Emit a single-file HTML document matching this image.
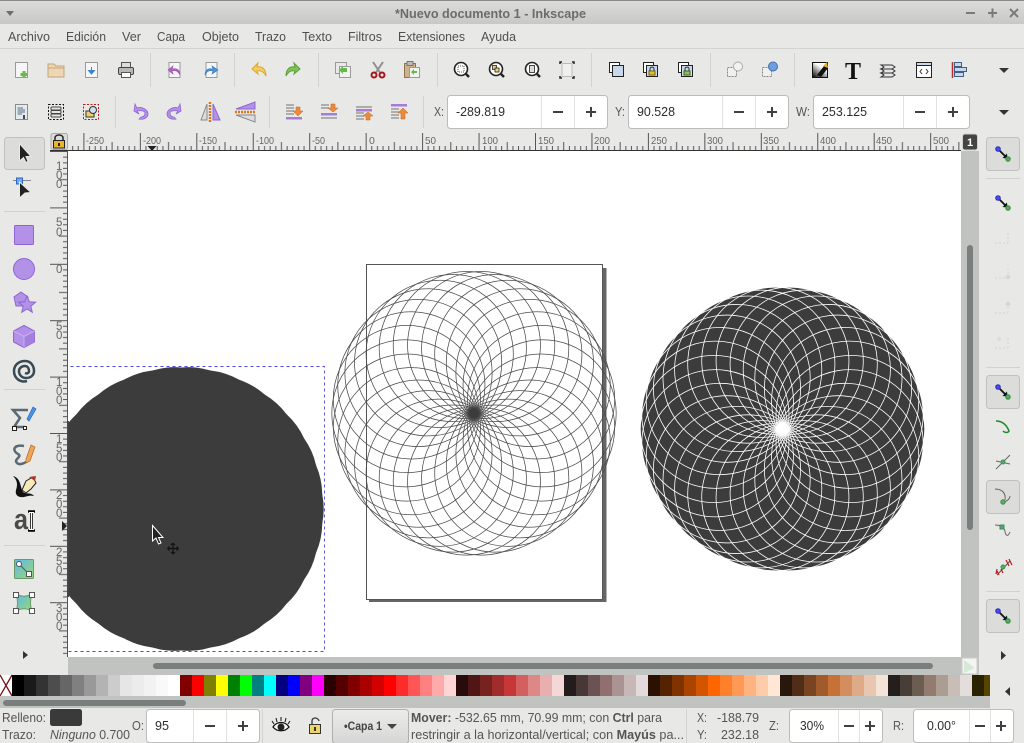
<!DOCTYPE html>
<html lang="es"><head><meta charset="utf-8"><title>Inkscape</title>
<style>
html,body{margin:0;padding:0;background:#e8e8e7;overflow:hidden}
svg{display:block}
text{font-family:"Liberation Sans",sans-serif;font-size:12.5px;fill:#4c4c4c}
.m{font-size:12.5px;fill:#505050}
.v{font-size:12.5px;fill:#2c2c2c}
.r{font-size:10.5px;fill:#666}
.l{font-size:11.5px;fill:#666}
.s{font-size:12.5px;fill:#555}
.sp{fill:#fff;stroke:#bcbcbc}
.dv{stroke:#e2e2e2;fill:none}
.sep{stroke:#d2d2d2;fill:none}
.pm{stroke:#404040;stroke-width:2;fill:none}
.p{fill:#b491e9;stroke:#8d66d4}
.doc{fill:#f6f6f6;stroke:#9a9a9a}
.btn{fill:#dcdcdb;stroke:#c0c0c0}
</style></head><body>
<svg xmlns="http://www.w3.org/2000/svg" width="1024" height="743" viewBox="0 0 1024 743">
<defs>
<linearGradient id="tb" x1="0" y1="0" x2="0" y2="1"><stop offset="0" stop-color="#dcdcdb"/><stop offset="1" stop-color="#c8c8c7"/></linearGradient>
<linearGradient id="cb" x1="0" y1="0" x2="0" y2="1"><stop offset="0" stop-color="#ececeb"/><stop offset="1" stop-color="#d6d6d5"/></linearGradient>
<linearGradient id="gr" x1="0" y1="0" x2="1" y2="1"><stop offset="0" stop-color="#5cb8f0"/><stop offset="1" stop-color="#9bd96a"/></linearGradient>
<linearGradient id="fs" x1="0.8" y1="0" x2="0.1" y2="1"><stop offset="0.3" stop-color="#fff"/><stop offset="1" stop-color="#111"/></linearGradient>
<clipPath id="cv"><rect x="68" y="151" width="893" height="506"/></clipPath>
<pattern id="rt" patternUnits="userSpaceOnUse" x="83.4" y="133" width="56.45" height="17">
<path d="M.5 0V17M6.1 13V17M11.8 13V17M17.4 13V17M23.1 13V17M28.7 9V17M34.4 13V17M40 13V17M45.7 13V17M51.3 13V17" stroke="#555" fill="none"/></pattern>
<pattern id="rl" patternUnits="userSpaceOnUse" x="50" y="151" width="18" height="56.4">
<path d="M0 .5H18M13 6.1H18M13 11.8H18M13 17.4H18M13 23H18M9 28.7H18M13 34.3H18M13 40H18M13 45.6H18M13 51.2H18" stroke="#555" fill="none"/></pattern>
<g id="gl">
<circle cx="68.600" r="73.600"/><circle cx="68.600" r="73.600" transform="rotate(12)"/><circle cx="68.600" r="73.600" transform="rotate(24)"/><circle cx="68.600" r="73.600" transform="rotate(36)"/><circle cx="68.600" r="73.600" transform="rotate(48)"/><circle cx="68.600" r="73.600" transform="rotate(60)"/><circle cx="68.600" r="73.600" transform="rotate(72)"/><circle cx="68.600" r="73.600" transform="rotate(84)"/><circle cx="68.600" r="73.600" transform="rotate(96)"/><circle cx="68.600" r="73.600" transform="rotate(108)"/><circle cx="68.600" r="73.600" transform="rotate(120)"/><circle cx="68.600" r="73.600" transform="rotate(132)"/><circle cx="68.600" r="73.600" transform="rotate(144)"/><circle cx="68.600" r="73.600" transform="rotate(156)"/><circle cx="68.600" r="73.600" transform="rotate(168)"/><circle cx="68.600" r="73.600" transform="rotate(180)"/><circle cx="68.600" r="73.600" transform="rotate(192)"/><circle cx="68.600" r="73.600" transform="rotate(204)"/><circle cx="68.600" r="73.600" transform="rotate(216)"/><circle cx="68.600" r="73.600" transform="rotate(228)"/><circle cx="68.600" r="73.600" transform="rotate(240)"/><circle cx="68.600" r="73.600" transform="rotate(252)"/><circle cx="68.600" r="73.600" transform="rotate(264)"/><circle cx="68.600" r="73.600" transform="rotate(276)"/><circle cx="68.600" r="73.600" transform="rotate(288)"/><circle cx="68.600" r="73.600" transform="rotate(300)"/><circle cx="68.600" r="73.600" transform="rotate(312)"/><circle cx="68.600" r="73.600" transform="rotate(324)"/><circle cx="68.600" r="73.600" transform="rotate(336)"/><circle cx="68.600" r="73.600" transform="rotate(348)"/>
</g>
<g id="snap"><path d="M-4-4L2.500 2.500" stroke="#111" stroke-width="1.800"/><path d="M-.5 4L4 -.5 4.500 4.500Z" fill="#111"/><circle cx="-5" cy="-5" r="2.300" fill="#4a4af0" stroke="#2c2cc0"/><circle cx="5" cy="5" r="2.100" fill="#6aa07a" stroke="#2e9a3e" stroke-width="1.300"/></g>
<g id="faint" stroke="#d0d6d0" fill="none" stroke-dasharray="2 2"><path d="M-8 6H5M5 6V-7"/></g>
</defs>

<!-- title bar -->
<rect width="1024" height="24" fill="url(#tb)"/>
<rect width="1024" height="1" fill="#8a8a8a"/>
<path d="M6 11H14L10 16Z" fill="#6e6e6e"/>
<text x="395" y="18" textLength="191" lengthAdjust="spacingAndGlyphs" font-weight="bold" style="font-size:12.5px;fill:#6c6c6c">*Nuevo documento 1 - Inkscape</text>
<path d="M966 13H975M988 13H997M992.500 8.500V17.500M1010 9L1018 17M1018 9L1010 17" stroke="#7a7a7a" stroke-width="2" fill="none"/>

<!-- menu -->
<g class="mt">
<text class="m" x="8" y="41" textLength="42" lengthAdjust="spacingAndGlyphs">Archivo</text>
<text class="m" x="66" y="41" textLength="40" lengthAdjust="spacingAndGlyphs">Edición</text>
<text class="m" x="122" y="41" textLength="19" lengthAdjust="spacingAndGlyphs">Ver</text>
<text class="m" x="157" y="41" textLength="28" lengthAdjust="spacingAndGlyphs">Capa</text>
<text class="m" x="202" y="41" textLength="37" lengthAdjust="spacingAndGlyphs">Objeto</text>
<text class="m" x="255" y="41" textLength="31" lengthAdjust="spacingAndGlyphs">Trazo</text>
<text class="m" x="302" y="41" textLength="30" lengthAdjust="spacingAndGlyphs">Texto</text>
<text class="m" x="348" y="41" textLength="34" lengthAdjust="spacingAndGlyphs">Filtros</text>
<text class="m" x="398" y="41" textLength="67" lengthAdjust="spacingAndGlyphs">Extensiones</text>
<text class="m" x="481" y="41" textLength="35" lengthAdjust="spacingAndGlyphs">Ayuda</text>
</g>
<path d="M0 48.500H1024" stroke="#d4d4d3"/>

<!-- toolbar 1 separators -->
<path class="sep" d="M150.500 53V87M234.500 53V87M318.500 53V87M437.500 53V87M591.500 53V87M710.500 53V87M794.500 53V87"/>
<!-- new -->
<g transform="translate(22,70)"><rect x="-6.500" y="-7.500" width="12" height="15" class="doc"/><path d="M2 1V8M-1.500 4.500H5.500" stroke="#6cb84a" stroke-width="3"/></g>
<!-- open -->
<g transform="translate(56,70)"><path d="M-8-6H-2L0-4H8V7H-8Z" fill="#ecd6b4" stroke="#c4a578"/><path d="M-8-2H8" stroke="#c4a578"/></g>
<!-- save -->
<g transform="translate(91,70)"><rect x="-5.500" y="-7.500" width="12" height="15" class="doc"/><path d="M.500-3V1M-2.500 0.500H3.500L.500 4Z" fill="#3b82d0" stroke="#3b82d0"/></g>
<!-- print -->
<g transform="translate(126,70)"><rect x="-4.500" y="-7.500" width="9" height="6" fill="#ddd" stroke="#555"/><rect x="-7.500" y="-2.500" width="15" height="7" rx="1.500" fill="#b8b8b8" stroke="#444"/><rect x="-4.500" y="2.500" width="9" height="5" fill="#fff" stroke="#555"/></g>
<!-- import/export -->
<g transform="translate(175,70)"><rect x="-6" y="-7.500" width="11" height="15" class="doc"/><path d="M5 5C5-1 1-2-3-1L-2-4-7 0-2 4-3 1C0 0 3 1 5 5Z" fill="#b466c4" stroke="#9a4cae" stroke-width=".6"/></g>
<g transform="translate(211,70)"><rect x="-5" y="-7.500" width="11" height="15" class="doc"/><path d="M-6 5C-6-1-2-2 2-1L1-4 7 0 1 4 2 1C-1 0-4 1-6 5Z" fill="#4a94dc" stroke="#3a78bc" stroke-width=".6"/></g>
<!-- undo redo -->
<path d="M266 76C266 69 262 66 257 67L258 63 252 69 258 74 257 71C261 70 264 72 266 76Z" fill="#f3cd62" stroke="#d9a92c"/>
<path d="M286 76C286 69 290 66 295 67L294 63 300 69 294 74 295 71C291 70 288 72 286 76Z" fill="#7fc25a" stroke="#5aa038"/>
<!-- dup cut paste -->
<g transform="translate(343,70)"><rect x="-7.500" y="-7.500" width="11" height="11" fill="#e8e8e8" stroke="#9a9a9a"/><rect x="-3.500" y="-3.500" width="11" height="11" fill="#f2f2f2" stroke="#9a9a9a"/><path d="M-4 0L0-4 0-2H4V2H0V4Z" fill="#66b848"/></g>
<g transform="translate(378,70)"><path d="M-5-8L3 4M5-8L-3 4" stroke="#8f8f8f" stroke-width="2"/><circle cx="-4" cy="5" r="2.500" fill="none" stroke="#a31818" stroke-width="2"/><circle cx="4" cy="5" r="2.500" fill="none" stroke="#a31818" stroke-width="2"/></g>
<g transform="translate(412,70)"><rect x="-7.500" y="-6.500" width="11" height="14" fill="#cfb28a" stroke="#8d7351"/><rect x="-5" y="-8.500" width="6" height="4" fill="#bbb" stroke="#777"/><rect x="-2.500" y="-2.500" width="10" height="10" fill="#f2f2f2" stroke="#9a9a9a"/><path d="M-1 2L2-1V1H5V3H2V5Z" fill="#66b848"/></g>
<!-- zooms -->
<g fill="#fff" stroke="#222" stroke-width="1.600">
<g transform="translate(461,70)"><circle cx="0" cy="-1" r="6.500"/><path d="M5 4L8 7" stroke-width="2.500"/><rect x="-3" y="-4" width="6" height="6" fill="none" stroke-width=".8" stroke-dasharray="1 1"/></g>
<g transform="translate(496,70)"><circle cx="0" cy="-1" r="6.500"/><path d="M5 4L8 7" stroke-width="2.500"/><rect x="-3.500" y="-4.500" width="4" height="4" fill="#ecd27a" stroke-width=".8"/><rect x="-1" y="-2" width="4" height="4" fill="#ecd27a" stroke-width=".8"/></g>
<g transform="translate(532,70)"><circle cx="0" cy="-1" r="6.500"/><path d="M5 4L8 7" stroke-width="2.500"/><rect x="-2.500" y="-4.500" width="5" height="7" fill="#ddd" stroke-width=".8"/></g>
</g>
<g transform="translate(567,70)"><rect x="-5" y="-6.500" width="10" height="13" fill="#f0f0f0" stroke="#bbb"/><path d="M-7-6V-8H-5M5-8H7V-6M7 6V8H5M-5 8H-7V6" stroke="#222" stroke-width="1.500" fill="none"/></g>
<!-- groups -->
<g stroke="#222"><rect x="609.500" y="62.500" width="10" height="10" fill="#fff"/><rect x="612.500" y="65.500" width="11" height="11" fill="#c6d8ea"/></g>
<g stroke="#222"><rect x="643.500" y="62.500" width="10" height="10" fill="#fff"/><rect x="646.500" y="65.500" width="11" height="11" fill="#c6d8ea"/></g><rect x="649" y="71" width="6" height="4" fill="#e8bf2a" stroke="#7a6310"/><path d="M650 71V69C650 66.500 654 66.500 654 69V71" fill="none" stroke="#333"/>
<g stroke="#222"><rect x="678.500" y="62.500" width="10" height="10" fill="#fff"/><rect x="681.500" y="65.500" width="11" height="11" fill="#c6d8ea"/></g><rect x="684" y="71" width="6" height="4" fill="#8cc05a" stroke="#44661c"/><path d="M685 71V69C685 66.500 689 66.500 689 69V71" fill="none" stroke="#333"/>
<!-- snap objects -->
<g transform="translate(735,70)"><rect x="-7.500" y="-2.500" width="9" height="9" fill="#f0f0f0" stroke="#888" stroke-dasharray="2 1"/><circle cx="3" cy="-3.500" r="4.500" fill="#f2f2f2" stroke="#aaa"/></g>
<g transform="translate(770,70)"><rect x="-7.500" y="-2.500" width="9" height="9" fill="#f0f0f0" stroke="#888" stroke-dasharray="2 1"/><circle cx="3" cy="-3.500" r="4.500" fill="#6f9fdb" stroke="#3e6fb0"/></g>
<!-- fill stroke, text, layers, xml, align -->
<g transform="translate(820,70)"><rect x="-7.500" y="-7.500" width="15" height="15" fill="url(#fs)" stroke="#111"/><path d="M-3 5L4-4 8-2 1 7Z" fill="#111"/><path d="M3-4L7-8 8-2Z" fill="#e8b020"/></g>
<text x="845" y="79" style="font-family:'Liberation Serif',serif;font-size:24px;font-weight:bold;fill:#111">T</text>
<g transform="translate(888,70)" fill="#e6e6e6" stroke="#333"><path d="M-7-5H4L7-3 4-1H-7L-4-3Z"/><path d="M-7-1H4L7 1 4 3H-7L-4 1Z"/><path d="M-7 3H4L7 5 4 7H-7L-4 5Z"/></g>
<g transform="translate(924,70)"><rect x="-7.500" y="-7.500" width="15" height="15" fill="#fff" stroke="#222"/><rect x="-7.500" y="-7.500" width="15" height="3" fill="#c8d8e8" stroke="#222"/><path d="M-2-1L-4 1.500-2 4M2-1L4 1.500 2 4" stroke="#333" fill="none"/></g>
<g transform="translate(959,70)"><path d="M-6.500-8V8" stroke="#c02a2a" stroke-width="1.500"/><rect x="-4.500" y="-7.500" width="7" height="4" fill="#c6d8ea" stroke="#3e5f88"/><rect x="-4.500" y="-2.500" width="12" height="4" fill="#c6d8ea" stroke="#3e5f88"/><rect x="-4.500" y="2.500" width="9" height="4" fill="#c6d8ea" stroke="#3e5f88"/></g>
<path d="M999 68H1009L1004 73Z" fill="#333"/>

<!-- toolbar 2 -->
<path class="sep" d="M115.500 96V128M269.500 96V128M423.500 96V128"/>
<g transform="translate(21,112)"><rect x="-5.500" y="-7.500" width="12" height="15" fill="#e4eaf0" stroke="#8a8a8a"/><path d="M-3.500-4H2M-3.500-2H4M-3.500 0H4M-3.500 2H1" stroke="#5a6a7a"/><path d="M3 3V7" stroke="#111" stroke-width="1.500"/></g>
<g transform="translate(56,112)"><rect x="-7.500" y="-7.500" width="15" height="15" fill="none" stroke="#111" stroke-dasharray="2 1.500"/><g fill="#e6e6e6" stroke="#444"><rect x="-5" y="-5" width="10" height="3" rx="1"/><rect x="-5" y="-1.500" width="10" height="3" rx="1"/><rect x="-5" y="2" width="10" height="3" rx="1"/></g></g>
<g transform="translate(91,112)"><rect x="-7.500" y="-7.500" width="15" height="15" fill="none" stroke="#c01818" stroke-dasharray="2 1.500"/><rect x="-5" y="-1" width="8" height="6" fill="#f0d064" stroke="#333"/><circle cx="2" cy="-2" r="3.500" fill="#cfe0ee" stroke="#333"/></g>
<g class="p"><path d="M135 104L137 108C142 106 148 110 148 114 148 118 143 120 139 119L141 117C144 117 145 115 145 113 145 111 141 110 137 111L139 114 134 111Z" stroke-width=".8"/>
<path d="M180 104L178 108C173 106 167 110 167 114 167 118 172 120 176 119L174 117C171 117 170 115 170 113 170 111 174 110 178 111L176 114 181 111Z" stroke-width=".8"/></g>
<g transform="translate(210,112)"><path d="M-3-8L-3 8H-9Z" fill="#ddd" stroke="#888"/><path d="M3-8L3 8H10Z" class="p"/><path d="M0-10V10" stroke="#d8781c" stroke-width="2.500" stroke-dasharray="2 1"/></g>
<g transform="translate(245,112)"><path d="M-9-3L10-3V-10Z" class="p"/><path d="M-9 3L10 3V10Z" fill="#ddd" stroke="#888"/><path d="M-10 0H11" stroke="#d8781c" stroke-width="2.500" stroke-dasharray="2 1"/></g>
<g id="z1" transform="translate(294,112)"><path d="M-8-7H0M-8-4H0M-8-1H0M-8 2H0" stroke="#999" stroke-width="1.500"/><rect x="-8" y="5" width="16" height="2.500" fill="#a87bd8"/><path d="M2-5H6V-1H9L4 4-1-1H2Z" fill="#ee8a3c" stroke="#c06018" stroke-width=".5"/></g>
<g transform="translate(329,112)"><path d="M-8-7H0M-8-4H0M-8 6H8" stroke="#999" stroke-width="1.500"/><rect x="-8" y="1" width="16" height="2.500" fill="#a87bd8"/><path d="M2-8H6V-4H9L4 0-1-4H2Z" fill="#ee8a3c" stroke="#c06018" stroke-width=".5"/></g>
<g transform="translate(364,112)"><path d="M-8 1H0M-8 4H0M-8 7H0" stroke="#999" stroke-width="1.500"/><path d="M-8-5H8" stroke="#999" stroke-width="1.500"/><rect x="-8" y="-3" width="16" height="2.500" fill="#a87bd8"/><path d="M2 8H6V4H9L4 0-1 4H2Z" fill="#ee8a3c" stroke="#c06018" stroke-width=".5"/></g>
<g transform="translate(399,112)"><path d="M-8-3H0M-8 0H0M-8 3H0M-8 6H0" stroke="#999" stroke-width="1.500"/><rect x="-8" y="-8" width="16" height="2.500" fill="#a87bd8"/><path d="M2 7H6V1H9L4-4-1 1H2Z" fill="#ee8a3c" stroke="#c06018" stroke-width=".5"/></g>

<text class="s" x="434" y="116" textLength="10" lengthAdjust="spacingAndGlyphs">X:</text>
<rect class="sp" x="447.500" y="95.500" width="160" height="33" rx="3"/>
<path class="dv" d="M541.500 96V128M574.500 96V128"/>
<text class="v" x="456" y="116" textLength="49" lengthAdjust="spacingAndGlyphs">-289.819</text>
<path class="pm" d="M553 112H563M586 112H596M591 107V117"/>
<text class="s" x="615" y="116" textLength="10" lengthAdjust="spacingAndGlyphs">Y:</text>
<rect class="sp" x="628.500" y="95.500" width="160" height="33" rx="3"/>
<path class="dv" d="M722.500 96V128M755.500 96V128"/>
<text class="v" x="637" y="116" textLength="38" lengthAdjust="spacingAndGlyphs">90.528</text>
<path class="pm" d="M734 112H744M767 112H777M772 107V117"/>
<text class="s" x="796" y="116" textLength="14" lengthAdjust="spacingAndGlyphs">W:</text>
<rect class="sp" x="813.500" y="95.500" width="156" height="33" rx="3"/>
<path class="dv" d="M903.500 96V128M936.500 96V128"/>
<text class="v" x="822" y="116" textLength="45" lengthAdjust="spacingAndGlyphs">253.125</text>
<path class="pm" d="M915 112H925M948 112H958M953 107V117"/>
<path d="M999 110H1009L1004 115Z" fill="#333"/>

<!-- canvas -->
<rect x="68" y="151" width="893" height="506" fill="#fff"/>
<g clip-path="url(#cv)">
<path d="M603 268H606.500V602H369V600H603Z" fill="#666"/>
<rect x="366.500" y="264.500" width="236" height="335" fill="none" stroke="#555"/>
<use href="#gl" transform="translate(474,413.300)" fill="none" stroke="#4a4a4a" stroke-width=".75"/>
<circle cx="474" cy="413.300" r="5.200" fill="#3c3c3c"/>
<use href="#gl" transform="translate(782.500,429)" fill="#3c3c3c"/>
<use href="#gl" transform="translate(782.500,429)" fill="none" stroke="#fff" stroke-width=".8"/>
<circle cx="782.500" cy="429" r="5.500" fill="#fff"/>
<use href="#gl" transform="translate(181.500,509)" fill="#3c3c3c"/>
<circle cx="181.500" cy="509" r="30" fill="#3c3c3c"/>
<rect x="40.500" y="366.500" width="284" height="285" fill="none" stroke="#4a4ae0" stroke-width=".9" stroke-dasharray="3 3"/>
<path d="M152.500 525.500V541L156 538 158.500 544 161 543 158.500 537.500H163Z" fill="#222" stroke="#fff"/>
<path d="M173 543V554M167.500 548.500H178.500M173 543L171 545M173 543L175 545M173 554L171 552M173 554L175 552M167.500 548.500L169.500 546.500M167.500 548.500L169.500 550.500M178.500 548.500L176.500 546.500M178.500 548.500L176.500 550.500" stroke="#111" stroke-width="1.200" fill="none"/>
</g>

<!-- top ruler -->
<rect x="68" y="133" width="894" height="17" fill="url(#rt)"/>
<path d="M50 150.500H962" stroke="#333"/>
<g class="rr">
<text class="r" x="86" y="144" textLength="18" lengthAdjust="spacingAndGlyphs">-250</text>
<text class="r" x="143" y="144" textLength="18" lengthAdjust="spacingAndGlyphs">-200</text>
<text class="r" x="199" y="144" textLength="18" lengthAdjust="spacingAndGlyphs">-150</text>
<text class="r" x="256" y="144" textLength="18" lengthAdjust="spacingAndGlyphs">-100</text>
<text class="r" x="312" y="144" textLength="13" lengthAdjust="spacingAndGlyphs">-50</text>
<text class="r" x="369" y="144">0</text>
<text class="r" x="425" y="144" textLength="11" lengthAdjust="spacingAndGlyphs">50</text>
<text class="r" x="482" y="144" textLength="16" lengthAdjust="spacingAndGlyphs">100</text>
<text class="r" x="538" y="144" textLength="16" lengthAdjust="spacingAndGlyphs">150</text>
<text class="r" x="594" y="144" textLength="16" lengthAdjust="spacingAndGlyphs">200</text>
<text class="r" x="651" y="144" textLength="16" lengthAdjust="spacingAndGlyphs">250</text>
<text class="r" x="707" y="144" textLength="16" lengthAdjust="spacingAndGlyphs">300</text>
<text class="r" x="763" y="144" textLength="16" lengthAdjust="spacingAndGlyphs">350</text>
<text class="r" x="820" y="144" textLength="16" lengthAdjust="spacingAndGlyphs">400</text>
<text class="r" x="876" y="144" textLength="16" lengthAdjust="spacingAndGlyphs">450</text>
<text class="r" x="933" y="144" textLength="16" lengthAdjust="spacingAndGlyphs">500</text>
</g>
<path d="M147.500 146H156.500L152 151Z" fill="#222"/>
<!-- left ruler -->
<rect x="50" y="151" width="18" height="506" fill="url(#rl)"/>
<rect x="67" y="151" width="1" height="506" fill="#555"/>
<rect x="67" y="421" width="2" height="176" fill="#444"/>
<path d="M62 521V531L67 526Z" fill="#222"/>
<g>
<text class="l" x="56" y="170">1</text><text class="l" x="56" y="179">0</text><text class="l" x="56" y="188">0</text>
<text class="l" x="56" y="226">5</text><text class="l" x="56" y="236">0</text>
<text class="l" x="56" y="273">0</text>
<text class="l" x="56" y="330">5</text><text class="l" x="56" y="339">0</text>
<text class="l" x="56" y="386">1</text><text class="l" x="56" y="395">0</text><text class="l" x="56" y="404">0</text>
<text class="l" x="56" y="443">1</text><text class="l" x="56" y="452">5</text><text class="l" x="56" y="461">0</text>
<text class="l" x="56" y="499">2</text><text class="l" x="56" y="508">0</text><text class="l" x="56" y="517">0</text>
<text class="l" x="56" y="556">2</text><text class="l" x="56" y="565">5</text><text class="l" x="56" y="574">0</text>
<text class="l" x="56" y="612">3</text><text class="l" x="56" y="621">0</text><text class="l" x="56" y="630">0</text>
</g>
<!-- lock corner -->
<rect x="51" y="133.500" width="16.500" height="16" fill="#dcdcdb" stroke="#aaa" rx="2"/>
<path d="M55 141V138C55 134 63 134 63 138V141" fill="none" stroke="#222" stroke-width="1.500"/>
<rect x="53.500" y="140.500" width="11" height="7.500" fill="#e9b52c" stroke="#222"/>
<rect x="58" y="143" width="2" height="3" fill="#222"/>

<!-- scrollbars -->
<rect x="961" y="151" width="18" height="524" fill="#c1c3c1"/>
<rect x="68" y="657" width="911" height="18" fill="#c1c3c1"/>
<rect x="967" y="245" width="6" height="285" rx="3" fill="#7b7e7e"/>
<rect x="153" y="663" width="780" height="6" rx="3" fill="#7b7e7e"/>
<path d="M962 658H977V674H962Z" fill="#f4f4f4" stroke="#ccc"/>
<path d="M964 660L975 668 964 673Z" fill="#d6e8d6"/>
<rect x="961" y="133" width="18" height="18" fill="#e8e8e7"/>
<rect x="962.500" y="134" width="15" height="16" rx="2.500" fill="#444" stroke="#d0d0d0"/>
<text x="967" y="146" style="font-size:11px;font-weight:bold;fill:#fff">1</text>

<!-- left toolbar -->
<rect class="btn" x="4.500" y="137.500" width="40" height="32" rx="3"/>
<path d="M19.500 143.500V161L23.500 157.500 26 162.500 28 161.500 26 156.500H31Z" fill="#222" stroke="#e8e8e8"/>
<path d="M13 180.500H31" stroke="#888"/>
<rect x="16.500" y="178" width="6" height="6" fill="#6eaaf0" stroke="#2a64c8"/>
<path d="M19.500 182V198L25 193 31 192.500Z" fill="#222" stroke="#e8e8e8"/>
<path class="sep" d="M4 211.500H45"/>
<rect class="p" x="14.500" y="225.500" width="19" height="19" rx="1"/>
<circle class="p" cx="24" cy="269" r="10.500"/>
<path class="p" d="M21 292L28 297 26 306 16 306 14 297Z"/>
<path class="p" d="M27 296L29.400 301.800 35.600 302.200 30.800 306.200 32.300 312.300 27 309 21.700 312.300 23.200 306.200 18.400 302.200 24.600 301.800Z"/>
<g><path class="p" d="M24 325.500L34.500 331V342L24 347.500 13.500 342V331Z"/><path d="M24 336.500L34.500 331V342L24 347.500Z" fill="#a47fdc"/><path d="M13.500 331L24 336.500 34.500 331M24 336.500V347.500" fill="none" stroke="#c8aef0"/></g>
<path d="M27 381C20 383 14 378 14 371 14 364 20 361 25 361 31 361 34 366 34 371 34 375 31 378 26 378 22 378 19 375 19 371 19 368 22 366 25 366 28 366 29 369 29 371 29 373 27 374 25 373" fill="none" stroke="#3a4a54" stroke-width="2.500"/>
<path class="sep" d="M4 389.500H45"/>
<g><path d="M28 410H13L20 418 14 427H25" fill="none" stroke="#5a6a74" stroke-width="2.500"/><path d="M27 419L33 407 36 409 29 421Z" fill="#4a94e8" stroke="#2a64b8" stroke-width=".7"/><rect x="12.500" y="426.500" width="4" height="4" fill="#fff" stroke="#222"/><rect x="23.500" y="426.500" width="3" height="3" fill="#fff" stroke="#222"/></g>
<g><path d="M24 446C13 444 12 451 18 454 23 457 13 459 17 463 19 465 23 464 26 462" fill="none" stroke="#5a6a74" stroke-width="2.500"/><path d="M26 459L31 445 35 447 30 461 26 463Z" fill="#f0a458" stroke="#b06a20" stroke-width=".7"/></g>
<g><path d="M13 476C17 480 18 484 16 490 15 494 17 498 24 497 28 496 30 495 34 496 30 491 24 496 22 490 20 484 20 478 13 476Z" fill="#111"/><path d="M22 490L26 481 33 477 36 483 31 489 26 493Z" fill="#f7e9b8" stroke="#222"/><path d="M29 477L36 476 35 481Z" fill="#b03030"/></g>
<g><text x="14" y="529" textLength="14" lengthAdjust="spacingAndGlyphs" style="font-size:29px;font-weight:bold;fill:#4a4a4a">a</text><path d="M28 511.500H35M28 530.500H35M31.500 511.500V530.500" stroke="#000" stroke-width="2.500" fill="none"/><path d="M29 512.500H34M29 529.500H34M31.500 512.500V529.500" stroke="#fff" fill="none"/></g>
<path class="sep" d="M4 545.500H45"/>
<g><rect x="14.500" y="559.500" width="19" height="19" rx="1" fill="url(#gr)" stroke="#6a9a6a"/><path d="M19 564L29 574" stroke="#555"/><circle cx="19" cy="564" r="2.500" fill="#fff" stroke="#555"/><rect x="26.500" y="571.500" width="5" height="5" fill="#fff" stroke="#555"/></g>
<g><path d="M16 594C22 597 26 597 32 594 30 600 30 606 32 611 26 608 22 608 16 611 18 606 18 600 16 594Z" fill="url(#gr)" stroke="#6a9a6a"/><g fill="#fff" stroke="#555"><rect x="13.500" y="592.500" width="5" height="5"/><rect x="29.500" y="592.500" width="5" height="5"/><rect x="13.500" y="608.500" width="5" height="5"/><rect x="29.500" y="608.500" width="5" height="5"/></g></g>
<path d="M23 651V659L28 655Z" fill="#333"/>

<!-- right toolbar -->
<rect class="btn" x="986.500" y="137.500" width="33" height="33" rx="3"/>
<use href="#snap" transform="translate(1003,154)"/>
<path class="sep" d="M986 178.500H1020"/>
<use href="#snap" transform="translate(1003,203)"/>
<use href="#faint" transform="translate(1003,237)"/>
<use href="#faint" transform="translate(1003,272)"/><circle cx="1008" cy="277" r="2.300" fill="#cfdcd2"/>
<use href="#faint" transform="translate(1003,307)"/><circle cx="1008" cy="304" r="2.300" fill="#cfdcd2"/>
<use href="#faint" transform="translate(1003,342)"/><circle cx="999" cy="339" r="2" fill="#d6e2d8"/>
<path class="sep" d="M986 367.500H1020"/>
<rect class="btn" x="986.500" y="375.500" width="33" height="33" rx="3"/>
<use href="#snap" transform="translate(1003,392)"/>
<path d="M996 421C1003 421 1007 426 1009 431 1008 433 1005 433 1003 431" fill="none" stroke="#1e8a28" stroke-width="1.500"/>
<path d="M996 469L1010 455" stroke="#666"/><path d="M996 461L1010 464" stroke="#666"/><circle cx="1003" cy="462" r="2" fill="#6aa07a" stroke="#2e9a3e"/>
<rect class="btn" x="986.500" y="480.500" width="33" height="33" rx="3"/>
<path d="M995 489C1003 489 1006 494 1005 500M1004 502C1008 501 1010 498 1010 496" fill="none" stroke="#666"/><circle cx="1003" cy="502" r="2.200" fill="#6aa07a" stroke="#2e9a3e"/>
<path d="M995 525C1002 525 1005 529 1005 532 1006 536 1008 537 1010 532" fill="none" stroke="#666"/><rect x="1000" y="525" width="4" height="4" fill="#6a90a0" stroke="#2e9a3e"/>
<path d="M997 575L1010 561" stroke="#555"/><path d="M997 571L999 575M1001 569L1003 573M1006 560L1009 566M1009 559L1012 565M997 569L996 574" stroke="#c01818" stroke-width="1.200"/><circle cx="1003" cy="567" r="2" fill="#6aa07a" stroke="#2e9a3e"/>
<path class="sep" d="M986 591.500H1020"/>
<rect class="btn" x="986.500" y="599.500" width="33" height="33" rx="3"/>
<use href="#snap" transform="translate(1003,616)"/>
<path d="M1001 651V660L1006 655.500Z" fill="#333"/>

<!-- palette -->
<g>
<rect x="0" y="675" width="12" height="21" fill="#fff"/><path d="M0 675L12 696M12 675L0 696" stroke="#7a1414" stroke-width="1.300"/>
<rect x="12" y="675" width="12" height="21" fill="#000000"/><rect x="24" y="675" width="12" height="21" fill="#1a1a1a"/><rect x="36" y="675" width="12" height="21" fill="#333333"/><rect x="48" y="675" width="12" height="21" fill="#4d4d4d"/><rect x="60" y="675" width="12" height="21" fill="#666666"/><rect x="72" y="675" width="12" height="21" fill="#808080"/><rect x="84" y="675" width="12" height="21" fill="#999999"/><rect x="96" y="675" width="12" height="21" fill="#b3b3b3"/><rect x="108" y="675" width="12" height="21" fill="#cccccc"/><rect x="120" y="675" width="12" height="21" fill="#e6e6e6"/><rect x="132" y="675" width="12" height="21" fill="#ececec"/><rect x="144" y="675" width="12" height="21" fill="#f2f2f2"/><rect x="156" y="675" width="12" height="21" fill="#f9f9f9"/><rect x="168" y="675" width="12" height="21" fill="#ffffff"/>
<rect x="180" y="675" width="12" height="21" fill="#800000"/><rect x="192" y="675" width="12" height="21" fill="#ff0000"/><rect x="204" y="675" width="12" height="21" fill="#808000"/><rect x="216" y="675" width="12" height="21" fill="#ffff00"/><rect x="228" y="675" width="12" height="21" fill="#008000"/><rect x="240" y="675" width="12" height="21" fill="#00ff00"/><rect x="252" y="675" width="12" height="21" fill="#008080"/><rect x="264" y="675" width="12" height="21" fill="#00ffff"/><rect x="276" y="675" width="12" height="21" fill="#000080"/><rect x="288" y="675" width="12" height="21" fill="#0000ff"/><rect x="300" y="675" width="12" height="21" fill="#800080"/><rect x="312" y="675" width="12" height="21" fill="#ff00ff"/>
<rect x="324" y="675" width="12" height="21" fill="#2b0000"/><rect x="336" y="675" width="12" height="21" fill="#550000"/><rect x="348" y="675" width="12" height="21" fill="#800000"/><rect x="360" y="675" width="12" height="21" fill="#aa0000"/><rect x="372" y="675" width="12" height="21" fill="#d40000"/><rect x="384" y="675" width="12" height="21" fill="#ff0000"/><rect x="396" y="675" width="12" height="21" fill="#ff2a2a"/><rect x="408" y="675" width="12" height="21" fill="#ff5555"/><rect x="420" y="675" width="12" height="21" fill="#ff8080"/><rect x="432" y="675" width="12" height="21" fill="#ffaaaa"/><rect x="444" y="675" width="12" height="21" fill="#ffd5d5"/>
<rect x="456" y="675" width="12" height="21" fill="#280b0b"/><rect x="468" y="675" width="12" height="21" fill="#501616"/><rect x="480" y="675" width="12" height="21" fill="#782121"/><rect x="492" y="675" width="12" height="21" fill="#a02c2c"/><rect x="504" y="675" width="12" height="21" fill="#c83737"/><rect x="516" y="675" width="12" height="21" fill="#d35f5f"/><rect x="528" y="675" width="12" height="21" fill="#de8787"/><rect x="540" y="675" width="12" height="21" fill="#e9afaf"/><rect x="552" y="675" width="12" height="21" fill="#f4d7d7"/>
<rect x="564" y="675" width="12" height="21" fill="#241c1c"/><rect x="576" y="675" width="12" height="21" fill="#483737"/><rect x="588" y="675" width="12" height="21" fill="#6c5353"/><rect x="600" y="675" width="12" height="21" fill="#916f6f"/><rect x="612" y="675" width="12" height="21" fill="#ac9393"/><rect x="624" y="675" width="12" height="21" fill="#c8b7b7"/><rect x="636" y="675" width="12" height="21" fill="#e3dbdb"/>
<rect x="648" y="675" width="12" height="21" fill="#2b1100"/><rect x="660" y="675" width="12" height="21" fill="#552200"/><rect x="672" y="675" width="12" height="21" fill="#803300"/><rect x="684" y="675" width="12" height="21" fill="#aa4400"/><rect x="696" y="675" width="12" height="21" fill="#d45500"/><rect x="708" y="675" width="12" height="21" fill="#ff6600"/><rect x="720" y="675" width="12" height="21" fill="#ff7f2a"/><rect x="732" y="675" width="12" height="21" fill="#ff9955"/><rect x="744" y="675" width="12" height="21" fill="#ffb380"/><rect x="756" y="675" width="12" height="21" fill="#ffccaa"/><rect x="768" y="675" width="12" height="21" fill="#ffe6d5"/>
<rect x="780" y="675" width="12" height="21" fill="#28170b"/><rect x="792" y="675" width="12" height="21" fill="#502d16"/><rect x="804" y="675" width="12" height="21" fill="#784421"/><rect x="816" y="675" width="12" height="21" fill="#a05a2c"/><rect x="828" y="675" width="12" height="21" fill="#c87137"/><rect x="840" y="675" width="12" height="21" fill="#d38d5f"/><rect x="852" y="675" width="12" height="21" fill="#deaa87"/><rect x="864" y="675" width="12" height="21" fill="#e9c6af"/><rect x="876" y="675" width="12" height="21" fill="#f4e3d7"/>
<rect x="888" y="675" width="12" height="21" fill="#241f1c"/><rect x="900" y="675" width="12" height="21" fill="#483e37"/><rect x="912" y="675" width="12" height="21" fill="#6c5d53"/><rect x="924" y="675" width="12" height="21" fill="#917c6f"/><rect x="936" y="675" width="12" height="21" fill="#ac9d93"/><rect x="948" y="675" width="12" height="21" fill="#c8beb7"/><rect x="960" y="675" width="12" height="21" fill="#e3dedb"/>
<rect x="972" y="675" width="12" height="21" fill="#2b2200"/><rect x="984" y="675" width="6" height="21" fill="#554400"/>
</g>
<rect x="0" y="696" width="990" height="12" fill="#c1c3c1"/>
<rect x="3" y="700" width="183" height="6" rx="3" fill="#7b7e7e"/>
<path d="M1010 687V696L1005 691.500Z" fill="#333"/>

<!-- status bar -->
<text class="s" x="2" y="722" textLength="44" lengthAdjust="spacingAndGlyphs">Relleno:</text>
<text class="s" x="2" y="739" textLength="34" lengthAdjust="spacingAndGlyphs">Trazo:</text>
<rect x="50" y="709" width="32" height="17" rx="2.500" fill="#3a3a3a"/>
<text class="s" x="50" y="739" textLength="80" lengthAdjust="spacingAndGlyphs"><tspan font-style="italic">Ninguno</tspan> 0.700</text>
<text class="s" x="132" y="730" textLength="12" lengthAdjust="spacingAndGlyphs">O:</text>
<rect class="sp" x="146.500" y="709.500" width="113" height="33" rx="3"/>
<path class="dv" d="M193.500 710V742M226.500 710V742"/>
<text class="v" x="155" y="730" textLength="14" lengthAdjust="spacingAndGlyphs">95</text>
<path class="pm" d="M205 726H215M238 726H248M243 721V731"/>
<path class="sep" d="M262.500 709V743"/>
<g transform="translate(281,726)"><path d="M-8 1C-4-5 4-5 8 1 4 6-4 6-8 1Z" fill="#fff" stroke="#111" stroke-width="1.300"/><circle cx="0" cy="1" r="3.500" fill="#222"/><path d="M-7-2L-9-5M-4-4L-5-8M0-5V-9M4-4L5-8M7-2L9-5" stroke="#111"/></g>
<g transform="translate(315,726)"><path d="M-3-2V-5C-3-9 3-9 4-5" fill="none" stroke="#333" stroke-width="1.300"/><rect x="-5.500" y="-1.500" width="11" height="9" fill="#efd36c" stroke="#333"/><rect x="-1" y="1" width="2" height="4" fill="#333"/></g>
<rect x="332.500" y="709.500" width="76" height="34" rx="3" fill="url(#cb)" stroke="#b0b0b0"/>
<text x="344" y="730" textLength="38" lengthAdjust="spacingAndGlyphs" style="font-size:12px;fill:#444;font-weight:bold">•Capa 1</text>
<path d="M387 724H397L392 729Z" fill="#444"/>
<text class="s" x="411" y="722" textLength="251" lengthAdjust="spacingAndGlyphs"><tspan font-weight="bold">Mover:</tspan> -532.65 mm, 70.99 mm; con <tspan font-weight="bold">Ctrl</tspan> para</text>
<text class="s" x="411" y="739" textLength="273" lengthAdjust="spacingAndGlyphs">restringir a la horizontal/vertical; con <tspan font-weight="bold">Mayús</tspan> pa...</text>
<path class="sep" d="M686.500 709V743"/>
<text class="s" x="697" y="722" textLength="10" lengthAdjust="spacingAndGlyphs">X:</text>
<text class="s" x="697" y="739" textLength="10" lengthAdjust="spacingAndGlyphs">Y:</text>
<text class="s" x="717" y="722" textLength="42" lengthAdjust="spacingAndGlyphs">-188.79</text>
<text class="s" x="721" y="739" textLength="38" lengthAdjust="spacingAndGlyphs">232.18</text>
<text class="s" x="769" y="730" textLength="10" lengthAdjust="spacingAndGlyphs">Z:</text>
<rect class="sp" x="789.500" y="709.500" width="93" height="33" rx="3"/>
<path class="dv" d="M838.500 710V742M859.500 710V742"/>
<text class="v" x="800" y="730" textLength="24" lengthAdjust="spacingAndGlyphs">30%</text>
<path class="pm" d="M844 726H854M865 726H875M870 721V731"/>
<text class="s" x="893" y="730" textLength="11" lengthAdjust="spacingAndGlyphs">R:</text>
<rect class="sp" x="913.500" y="709.500" width="100" height="33" rx="3"/>
<path class="dv" d="M969.500 710V742M990.500 710V742"/>
<text class="v" x="927" y="730" textLength="29" lengthAdjust="spacingAndGlyphs">0.00°</text>
<path class="pm" d="M975 726H985M996 726H1006M1001 721V731"/>
</svg>
</body></html>
